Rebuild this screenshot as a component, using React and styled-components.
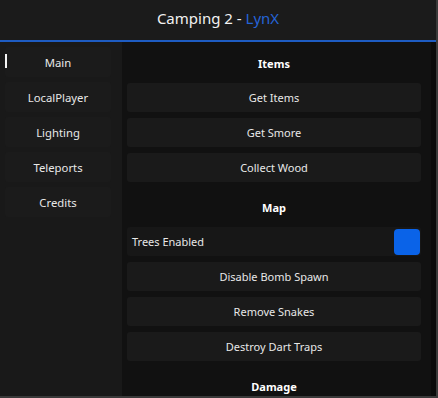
import React from 'react'
import styled, { createGlobalStyle } from 'styled-components';

const GlobalStyle = createGlobalStyle`
    html, body {
        margin: 0;
        padding: 0;
        background: #3a3a3a;
    }
    body {
        font-family: "Noto Sans", "Open Sans", sans-serif;
    }
`

const Window = styled.div`
    width: 436px;
    height: 396px;
    display: flex;
    flex-direction: column;
    background: #111111;
    overflow: hidden;
`

const TitleBar = styled.div`
    height: 40px;
    display: flex;
    align-items: center;
    justify-content: center;
    background: #1b1b1b;
    color: #f2f2f2;
    font-size: 15px;
    padding-bottom: 4px;
    box-sizing: border-box;
`

const Accent = styled.span`
    color: #2563d6;
`

const AccentLine = styled.div`
    height: 2px;
    background: #1e5cc2;
`

const Body = styled.div`
    flex: 1;
    min-height: 0;
    display: flex;
`

const Sidebar = styled.div`
    width: 122px;
    flex-shrink: 0;
    background: #191919;
    padding-top: 5px;
    display: flex;
    flex-direction: column;
    gap: 5px;
`

const Tab = styled.div`
    position: relative;
    margin-left: 5px;
    width: 106px;
    height: 30px;
    display: flex;
    align-items: center;
    justify-content: center;
    background: #1b1b1b;
    border-radius: 3px;
    color: #e8e8e8;
    font-size: 11.3px;

    &::before {
        content: '';
        display: ${p => p.$active ? 'block' : 'none'};
        position: absolute;
        left: 0;
        top: 7px;
        width: 2px;
        height: 14px;
        background: #f5f5f5;
    }
`

const Content = styled.div`
    flex: 1;
    min-width: 0;
    background: #111111;
    padding: 2px 10px 0 5px;
    display: flex;
    flex-direction: column;
    gap: 6px;
    overflow: hidden;
    border-right: 5px solid #0b0b0b;
`

const Header = styled.div`
    height: 33px;
    flex-shrink: 0;
    box-sizing: border-box;
    padding-top: 6px;
    display: flex;
    align-items: center;
    justify-content: center;
    color: #ffffff;
    font-weight: 700;
    font-size: 11px;
`

const Button = styled.div`
    height: 29px;
    flex-shrink: 0;
    display: flex;
    align-items: center;
    justify-content: center;
    background: #1a1a1a;
    border-radius: 3px;
    color: #e8e8e8;
    font-size: 11px;
`

const ToggleRow = styled.div`
    height: 29px;
    flex-shrink: 0;
    display: flex;
    align-items: center;
    justify-content: space-between;
    padding: 0 1px 0 5px;
    background: #171717;
    border-radius: 3px;
    color: #e8e8e8;
    font-size: 11px;
`

const Toggle = styled.div`
    width: 26px;
    height: 26px;
    border-radius: 4px;
    background: ${p => p.$on ? '#0a63e8' : '#2a2a2a'};
`

const tabs = ['Main', 'LocalPlayer', 'Lighting', 'Teleports', 'Credits']

function App() {
    return (
        <>
            <GlobalStyle />
            <Window>
                <TitleBar>Camping 2 -&nbsp;<Accent>LynX</Accent></TitleBar>
                <AccentLine />
                <Body>
                    <Sidebar>
                        {tabs.map((t, i) => (
                            <Tab key={t} $active={i === 0}>{t}</Tab>
                        ))}
                    </Sidebar>
                    <Content>
                        <Header>Items</Header>
                        <Button>Get Items</Button>
                        <Button>Get Smore</Button>
                        <Button>Collect Wood</Button>
                        <Header>Map</Header>
                        <ToggleRow>
                            Trees Enabled
                            <Toggle $on />
                        </ToggleRow>
                        <Button>Disable Bomb Spawn</Button>
                        <Button>Remove Snakes</Button>
                        <Button>Destroy Dart Traps</Button>
                        <Header>Damage</Header>
                    </Content>
                </Body>
            </Window>
        </>
    )
}

export default App
